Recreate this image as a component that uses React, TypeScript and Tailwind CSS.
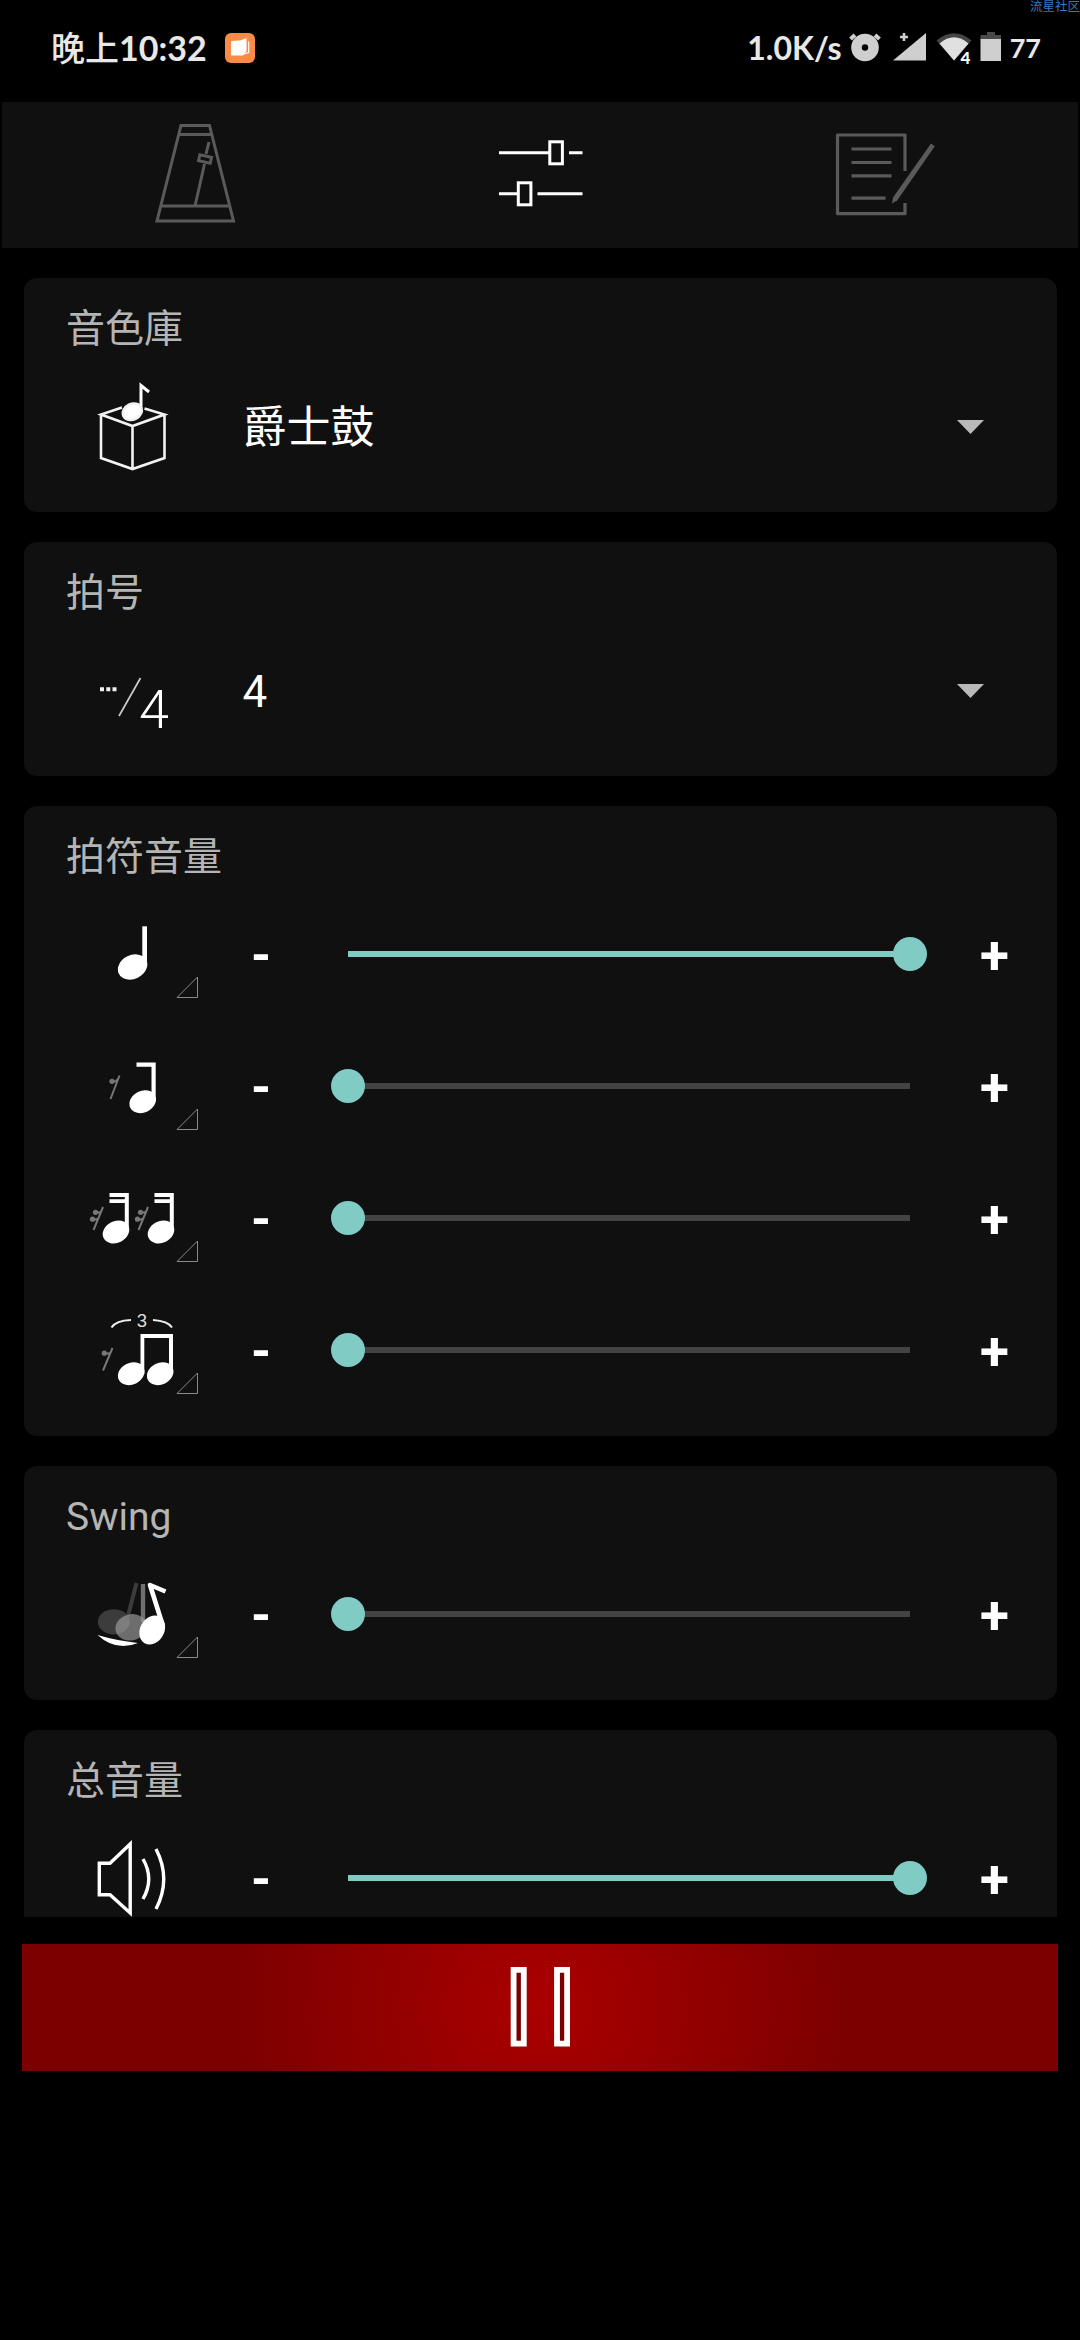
import { useState } from 'react';
import type { ReactNode } from 'react';

const NoteHead = ({ cx, cy, rx = 13.8, ry = 10.8 }: { cx: number; cy: number; rx?: number; ry?: number }) => (
  <ellipse cx={cx} cy={cy} rx={rx} ry={ry} transform={`rotate(-26 ${cx} ${cy})`} fill="#fff" />
);

const MetronomeIcon = () => (
  <svg viewBox="145.5 125 100 100" className="w-[100px] h-[100px] overflow-visible" fill="none" stroke="#5a5a5a" strokeWidth="3">
    <path d="M181.5 125.5H210L234 221H157.5Z" />
    <path d="M179.5 134.5H212M162 206H229.5M195.5 206L205 164M206.5 154L209.5 142" />
    <rect x="199.5" y="156" width="12" height="6" transform="rotate(13 205.5 159)" />
  </svg>
);

const SlidersIcon = () => (
  <svg viewBox="490 125 100 100" className="w-[100px] h-[100px]" fill="none" stroke="#fff" strokeWidth="3">
    <path d="M499 152.7H549M569 152.7H582.5M499 193.7H517M537.5 193.7H582.5" />
    <rect x="549.8" y="141.8" width="12.6" height="22" />
    <rect x="518.3" y="182.8" width="12.6" height="22" />
  </svg>
);

const NotesIcon = () => (
  <svg viewBox="835 125 100 100" className="w-[100px] h-[100px]" fill="none" stroke="#5a5a5a" strokeWidth="3.2">
    <path d="M905 171V135H837.5V213.7H905V203" strokeLinejoin="round" />
    <path d="M851.5 149H891.5M851.5 162.5H891.5M851.5 175.8H891.5M851.5 198.2H885.5" />
    <path d="M931 143.5L934.8 146.3L897.3 200.3L892 203.5L893 197.5Z" fill="#5a5a5a" stroke="none" />
  </svg>
);

const BoxIcon = () => (
  <svg viewBox="66 360 132 132" className="size-[132px]" fill="none" stroke="#f2f2f2" strokeWidth="2.6">
    <path d="M122 407.5L101 414.5L132.5 426L164.5 414.5L144.5 408.5M101 414.5V458L132.5 469L164.5 458V414.5M132.5 426V469" />
    <path d="M141 413V385.5L149 392" strokeWidth="3" stroke="#fff" />
    <NoteHead cx={132.3} cy={411.8} rx={9.8} ry={7.8} />
  </svg>
);

const SignatureIcon = () => (
  <svg viewBox="66 624 132 132" className="size-[132px]">
    <path d="M100 687.2h4v4h-4zM106.3 687.2h4v4h-4zM112.5 687.2h4v4h-4z" fill="#eee" />
    <path d="M140.5 678L119 716" stroke="#ccc" strokeWidth="1.7" />
    <text x="139" y="728" fill="#fff" fontSize="54" fontWeight="300" fontFamily="Roboto, sans-serif">4</text>
  </svg>
);

const QuarterIcon = () => (
  <svg viewBox="66 888 132 132" className="size-[132px]">
    <path d="M142.3 926.3h4.7V967h-4.7z" fill="#fff" />
    <NoteHead cx={132.6} cy={967} rx={15.3} ry={11.9} />
  </svg>
);

const EighthIcon = () => (
  <svg viewBox="66 1020 132 132" className="size-[132px]">
    <circle cx="112" cy="1081.3" r="2.6" fill="#777" />
    <path d="M112 1082Q116 1082 118 1079M119.5 1075.5L110.5 1099" fill="none" stroke="#777" strokeWidth="2" />
    <path d="M136.5 1062.5h19.2V1101h-4.2v-34.3h-15z" fill="#fff" />
    <NoteHead cx={142.7} cy={1101.7} />
  </svg>
);

const SixteenthIcon = () => (
  <svg viewBox="66 1152 132 132" className="size-[132px]">
    {[0, 45].map((dx) => (
      <g key={dx} transform={`translate(${dx} 0)`}>
        <circle cx="95.5" cy="1212.3" r="2.6" fill="#777" />
        <circle cx="92.5" cy="1219.2" r="2.6" fill="#777" />
        <path d="M95.5 1213L100.5 1212M92.5 1220L97.5 1219M103 1207L93.5 1230" fill="none" stroke="#777" strokeWidth="2" />
        <path d="M109.5 1193h19.3V1232h-4V1203h-15.3v-3.7h15.3V1197h-15.3z" fill="#fff" />
        <NoteHead cx={116} cy={1232} />
      </g>
    ))}
  </svg>
);

const TripletIcon = () => (
  <svg viewBox="66 1284 132 132" className="size-[132px]">
    <path d="M111.5 1327.5Q116 1320.5 131 1320M153 1320Q168 1321 172 1327.5" fill="none" stroke="#eee" strokeWidth="2" />
    <text x="142" y="1327" textAnchor="middle" fill="#ddd" fontSize="18.5" fontFamily="Liberation Sans, sans-serif">3</text>
    <circle cx="104.3" cy="1353.2" r="2.6" fill="#777" />
    <path d="M104.3 1354L110 1353M112.5 1348L103 1370.5" fill="none" stroke="#777" strokeWidth="2" />
    <path d="M140.5 1334h32.5v40h-4v-36h-24.7v36h-3.8z" fill="#fff" />
    <NoteHead cx={131.2} cy={1373.7} />
    <NoteHead cx={160.2} cy={1373.7} />
  </svg>
);

const SwingIcon = () => (
  <svg viewBox="66 1548 132 132" className="size-[132px]">
    <path d="M136.5 1583L128 1616" stroke="#3c3c3c" strokeWidth="4" />
    <ellipse cx="113.8" cy="1621.8" rx="16" ry="12.6" fill="#3c3c3c" />
    <path d="M143 1584V1622" stroke="#707070" strokeWidth="4.4" />
    <ellipse cx="131" cy="1627.3" rx="15.8" ry="13" fill="#a0a0a0" fillOpacity="0.65" transform="rotate(-14 131 1627)" />
    <path d="M163 1626L150 1585L165.5 1591.5" fill="none" stroke="#fff" strokeWidth="4.6" strokeLinejoin="round" />
    <ellipse cx="152.2" cy="1630" rx="12" ry="15.2" fill="#fff" transform="rotate(30 152.2 1630)" />
    <path d="M97.5 1635Q116 1640.5 138 1643Q116 1652 97.5 1635Z" fill="#fff" />
  </svg>
);

const SpeakerIcon = () => (
  <svg viewBox="66 1812 132 132" className="size-[132px]" fill="none" stroke="#fff" strokeWidth="3.4">
    <path d="M99.3 1863.3H110L130.2 1844V1913L110 1894.7H99.3Z" />
    <path d="M143 1859Q154.5 1879 143 1899M156 1849Q171.5 1879 156 1909" />
  </svg>
);

const CornerMark = () => (
  <svg viewBox="0 0 22 22" className="absolute right-0 bottom-[22px] size-[22px]" fill="none" stroke="#8a8a8a" strokeWidth="1">
    <path d="M1 21.5L21.5 1V21.5Z" />
  </svg>
);

const Card = ({ title, children }: { title: string; children: ReactNode }) => (
  <section className="shrink-0 rounded-[13px] bg-[#101010] pb-5">
    <h2 className="h-[82px] pt-[22px] pl-[42.5px] text-[39px] leading-[58px] text-[#b5b5b5]">{title}</h2>
    {children}
  </section>
);

const SelectRow = ({ icon, value }: { icon: ReactNode; value: string }) => (
  <div className="flex h-[132px] items-center pl-[42px] pr-[73px]">
    {icon}
    <span className="flex-1 pt-1 pl-[45px] text-[44px] leading-[60px] text-white">{value}</span>
    <svg viewBox="0 0 27 14" className="mt-0.5 h-3.5 w-[27px]">
      <path d="M0 0H27L13.5 14Z" fill="#b9b9b9" />
    </svg>
  </div>
);

interface SliderRowProps {
  icon: ReactNode;
  initial: number;
  corner?: boolean;
}

const SliderRow = ({ icon, initial, corner = true }: SliderRowProps) => {
  const [value, setValue] = useState(initial);
  const step = (d: number) => setValue((v) => Math.min(100, Math.max(0, v + d)));

  return (
    <div className="flex h-[132px] items-center pl-[42px]">
      <div className="relative size-[132px]">
        {icon}
        {corner && <CornerMark />}
      </div>
      <button onClick={() => step(-1)} className="h-full w-[127px] pt-[5px] text-[51px] font-bold text-white">-</button>
      <div className="w-[608px] px-[23px]">
        <div className="relative h-1.5 bg-[#434343]">
          <div className="h-full bg-[#80cbc4]" style={{ width: `${value}%` }} />
          <div
            className="absolute top-1/2 size-[34px] -translate-x-1/2 -translate-y-1/2 rounded-full bg-[#80cbc4]"
            style={{ left: `${value}%` }}
          />
        </div>
      </div>
      <button onClick={() => step(1)} className="h-full w-[124px] pt-[5px] text-[53px] font-bold text-white">+</button>
    </div>
  );
};

const StatusBar = () => (
  <header className="relative flex h-[102px] shrink-0 items-center pl-[51px] pr-[39px] pb-1.5 font-['Lato','Noto_Sans_CJK_SC',sans-serif] font-bold text-[#e8e8e8]">
    <span className="text-[34px] leading-[40px]">
      <span className="font-medium">晚上</span>10:32
    </span>
    <svg viewBox="0 0 30 30" className="ml-[18px] size-[30px]">
      <rect width="30" height="30" rx="6" fill="#f98b47" />
      <path d="M6 8L15 7.5L21.5 5V18L18 22.5H6Z" fill="#fff" />
      <path d="M23.7 8.5V19.5L18 21.3" fill="none" stroke="#fff" strokeWidth="1.2" />
    </svg>
    <span className="ml-auto text-[32px] leading-[40px]">1.0K/s</span>
    <svg viewBox="848 30 156 38" className="ml-1.5 h-[38px] w-[156px]">
      <circle cx="865" cy="48.5" r="13.8" fill="#cfcfcf" />
      <circle cx="865" cy="48.5" r="3.2" fill="#000" />
      <path d="M850.5 40L855 36M879.5 40L875 36" stroke="#cfcfcf" strokeWidth="4" />
      <path d="M893 61.5L926 34V61.5Z" fill="#cfcfcf" />
      <path d="M904 34v8M900 38h8" stroke="#cfcfcf" strokeWidth="2.6" />
      <path d="M936.5 41.5Q954 27 971.5 41.5L954 61.5Z" fill="#444" />
      <path d="M939.5 44.5Q954 32 968.5 44.5L954 61.5Z" fill="#e0e0e0" />
      <text x="960.5" y="65" fill="#fff" stroke="#000" strokeWidth="2" paintOrder="stroke" fontSize="17" fontWeight="900" fontFamily="Lato, sans-serif">4</text>
      <path d="M980.5 36H987V33H995V36H1001V41H980.5Z" fill="#4a4a4a" />
      <path d="M980.5 40H1001V62H980.5Z" fill="#cfcfcf" />
    </svg>
    <span className="ml-1.5 text-[27px] leading-[40px]">77</span>
    <span className="absolute top-0 right-0 text-[12.5px] leading-[14px] font-normal whitespace-nowrap text-[#3579c4]">流星社区</span>
  </header>
);

export default function App() {
  const [playing, setPlaying] = useState(true);

  return (
    <div className="flex h-[2340px] w-[1080px] flex-col overflow-hidden bg-black font-['Roboto','Noto_Sans_CJK_SC',sans-serif]">
      <StatusBar />

      <nav className="mx-0.5 grid h-[146px] shrink-0 grid-cols-3 place-items-center bg-[#101010] px-[21px]">
        <MetronomeIcon />
        <SlidersIcon />
        <NotesIcon />
      </nav>

      <main className="mx-[23.5px] mt-[30px] flex h-[1639px] shrink-0 flex-col gap-[30px] overflow-hidden">
        <Card title="音色庫">
          <SelectRow icon={<BoxIcon />} value="爵士鼓" />
        </Card>
        <Card title="拍号">
          <SelectRow icon={<SignatureIcon />} value="4" />
        </Card>
        <Card title="拍符音量">
          <SliderRow icon={<QuarterIcon />} initial={100} />
          <SliderRow icon={<EighthIcon />} initial={0} />
          <SliderRow icon={<SixteenthIcon />} initial={0} />
          <SliderRow icon={<TripletIcon />} initial={0} />
        </Card>
        <Card title="Swing">
          <SliderRow icon={<SwingIcon />} initial={0} />
        </Card>
        <Card title="总音量">
          <SliderRow icon={<SpeakerIcon />} initial={100} corner={false} />
        </Card>
      </main>

      <button
        onClick={() => setPlaying(!playing)}
        className="mx-[22px] mt-[27px] flex h-[127px] shrink-0 items-center justify-center bg-[radial-gradient(circle_at_center,#aa0000_0px,#7c0000_310px)] pb-0.5"
      >
        <svg viewBox="0 0 60 80" className="h-20 w-[60px]" fill="#7c0000" stroke="#fff" strokeWidth="5.8">
          {playing ? (
            <>
              <path d="M3.6 2.9H13.8V76.6H3.6Z" />
              <path d="M47 2.9H57.1V76.6H47Z" />
            </>
          ) : (
            <path d="M8 5L54 40L8 75Z" />
          )}
        </svg>
      </button>
    </div>
  );
}
